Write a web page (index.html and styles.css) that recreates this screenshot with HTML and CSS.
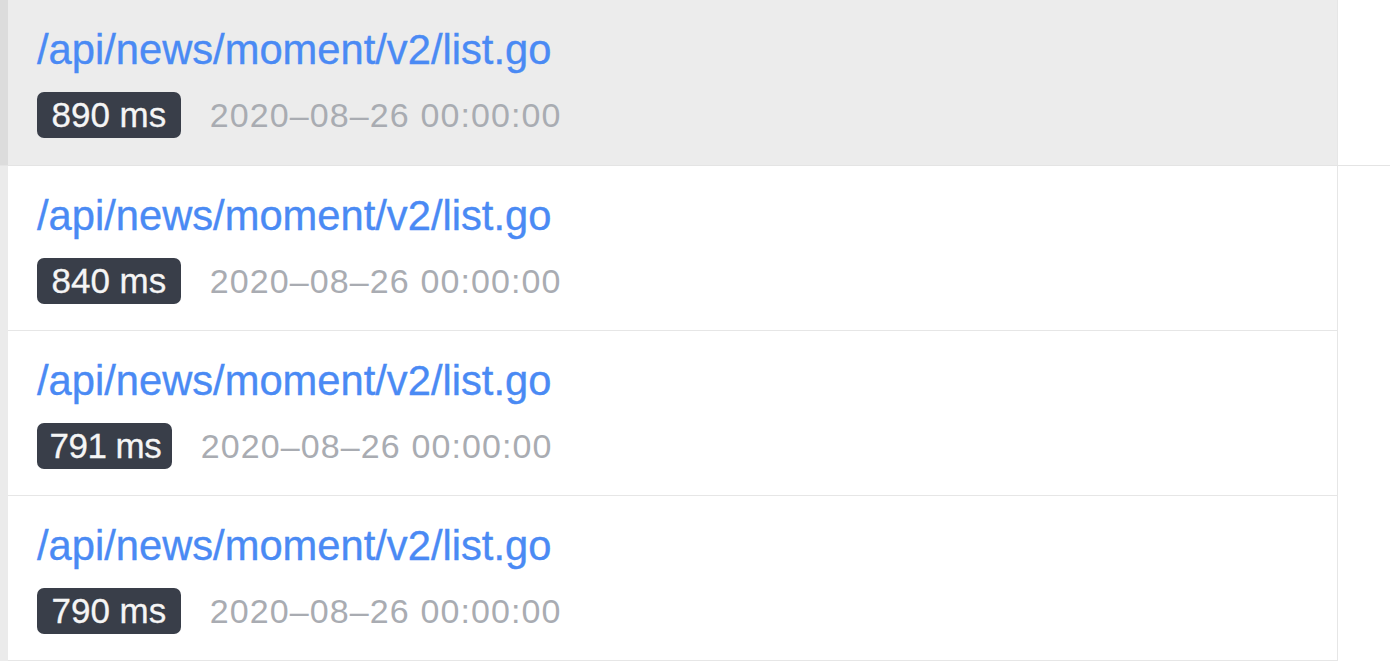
FILE: index.html
```html
<!DOCTYPE html>
<html>
<head>
<meta charset="utf-8">
<link rel="stylesheet" href="styles.css">
</head>
<body>
<div class="list">
  <div class="line line-active">
    <div class="gutter"></div>
    <div class="row">
      <a class="path">/api/news/moment/v2/list.go</a>
      <div class="meta"><span class="badge">890 ms</span><span class="date">2020–08–26 00:00:00</span></div>
    </div>
  </div>
  <div class="line">
    <div class="gutter"></div>
    <div class="row">
      <a class="path">/api/news/moment/v2/list.go</a>
      <div class="meta"><span class="badge">840 ms</span><span class="date">2020–08–26 00:00:00</span></div>
    </div>
  </div>
  <div class="line">
    <div class="gutter"></div>
    <div class="row">
      <a class="path">/api/news/moment/v2/list.go</a>
      <div class="meta"><span class="badge badge-narrow">791 ms</span><span class="date">2020–08–26 00:00:00</span></div>
    </div>
  </div>
  <div class="line">
    <div class="gutter"></div>
    <div class="row">
      <a class="path">/api/news/moment/v2/list.go</a>
      <div class="meta"><span class="badge">790 ms</span><span class="date">2020–08–26 00:00:00</span></div>
    </div>
  </div>
</div>
</body>
</html>
```
FILE: styles.css
```css
html, body {
  margin: 0;
  padding: 0;
  background: #ffffff;
}
body {
  font-family: "Liberation Sans", Arial, sans-serif;
}
.list {
  display: flex;
  flex-direction: column;
}
.line {
  display: flex;
}
.line-active {
  border-bottom: 1px solid #e4e4e4;
}
.gutter {
  width: 8px;
  flex: none;
  background: #ebebeb;
}
.line-active .gutter {
  background: #dcdcdc;
}
.row {
  width: 1300px;
  flex: none;
  padding: 22px 0 27px 29px;
  border-right: 1px solid #e6e6e6;
  display: flex;
  flex-direction: column;
  align-items: flex-start;
  gap: 14px;
}
.line:not(.line-active) .row {
  padding-bottom: 26px;
  border-bottom: 1px solid #e6e6e6;
}
.line-active .row {
  background: #ececec;
}
.path {
  font-size: 41.7px;
  line-height: 56px;
  color: #4a8af4;
  -webkit-text-stroke: 0.35px #4a8af4;
  cursor: pointer;
}
.meta {
  display: flex;
  align-items: center;
  gap: 29px;
}
.badge {
  height: 46px;
  box-sizing: border-box;
  padding: 0 14.5px 0 14.5px;
  display: flex;
  align-items: center;
  background: #393e49;
  color: #f5f5f5;
  -webkit-text-stroke: 0.3px #f5f5f5;
  border-radius: 7px;
  font-size: 35px;
}
.badge-narrow {
  padding-right: 10.5px;
  padding-left: 12.5px;
  letter-spacing: -0.5px;
}
.date {
  font-size: 34px;
  letter-spacing: 1.1px;
  color: #a9acb2;
}
```
